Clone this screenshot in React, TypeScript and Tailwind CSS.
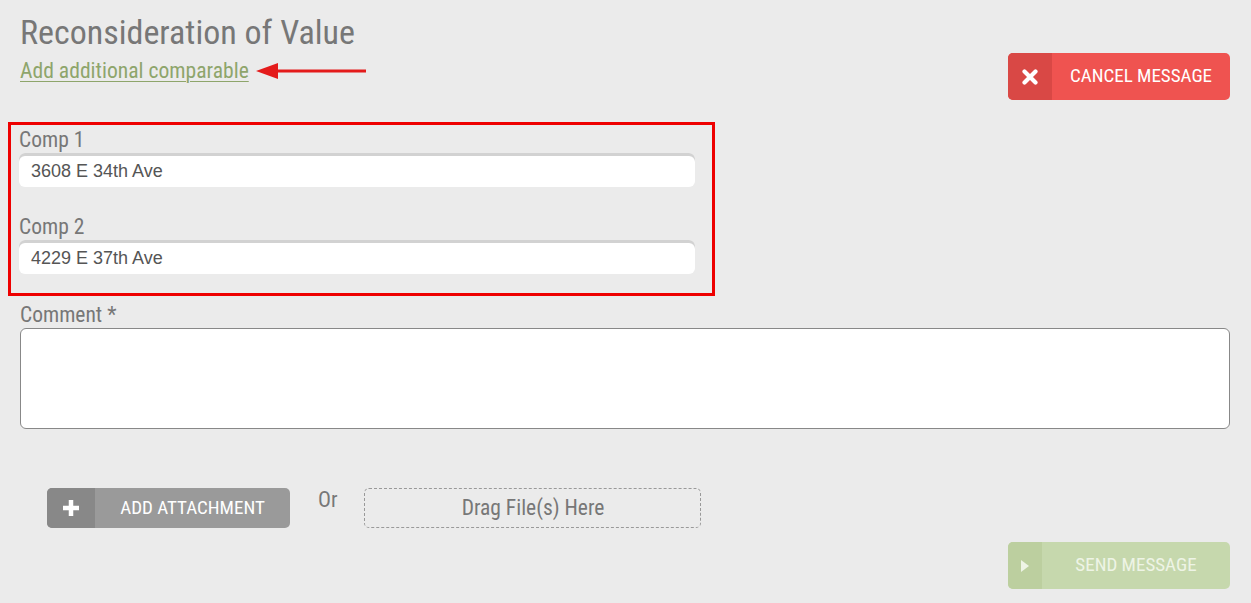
import React from "react";

const cond = { fontFamily: '"Roboto Condensed", "Liberation Sans Narrow", Roboto, sans-serif' };

export default function App() {
  return (
    <div className="min-h-[603px] w-[1251px] bg-[#ebebeb] pl-[20px] pr-[21px] pt-[15px]" style={cond}>
      <div className="flex items-start justify-between">
        <div className="flex flex-col">
          <h1 className="text-[34px] leading-[34px] text-[#777] font-normal">Reconsideration of Value</h1>
          <div className="relative mt-[10px] flex items-center">
            <a className="text-[21.6px] leading-[24px] text-[#8ea56b] underline underline-offset-[3px] decoration-1 cursor-pointer">
              Add additional comparable
            </a>
            <svg className="ml-[7px]" width="110" height="16" viewBox="0 0 110 16">
              <polygon points="0,8 22,0 22,16" fill="#e41b1b" />
              <rect x="20" y="6.5" width="90" height="3" fill="#e41b1b" />
            </svg>
          </div>
        </div>
        <button className="mt-[38px] flex h-[47px] w-[222px] overflow-hidden rounded-[5px] bg-[#ef5350] text-white">
          <span className="flex h-full w-[44px] items-center justify-center bg-[#d94845]">
            <svg width="16" height="16" viewBox="0 0 16 16">
              <path d="M2.5 2.5 L13.5 13.5 M13.5 2.5 L2.5 13.5" stroke="white" strokeWidth="4.2" strokeLinecap="round" />
            </svg>
          </span>
          <span className="flex flex-1 items-center justify-center text-[19px] uppercase">Cancel Message</span>
        </button>
      </div>

      <div className="-ml-[12px] mt-[22px] w-[707px] border-[3px] border-[#e00] pb-[19px] pl-[8px] pr-[17px] pt-[3px]">
        <Field label="Comp 1" value="3608 E 34th Ave" />
        <div className="h-[28px]" />
        <Field label="Comp 2" value="4229 E 37th Ave" />
      </div>

      <div className="mt-[7px] text-[21.5px] leading-[24px] text-[#777]">Comment *</div>
      <div className="mt-[1px] h-[101px] w-[1210px] rounded-[6px] border border-[#888] bg-white" />

      <div className="mt-[59px] flex items-start pl-[27px]">
        <button className="flex h-[40px] w-[243px] overflow-hidden rounded-[5px] bg-[#9a9a9a] text-white">
          <span className="flex h-full w-[48px] items-center justify-center bg-[#888]">
            <svg width="18" height="18" viewBox="0 0 18 18">
              <path d="M9 1 V17 M1 9 H17" stroke="white" strokeWidth="4.5" />
            </svg>
          </span>
          <span className="flex flex-1 items-center justify-center text-[19px] uppercase">Add Attachment</span>
        </button>
        <span className="ml-[28px] mt-[0px] text-[21.5px] leading-[24px] text-[#777]">Or</span>
        <div className="ml-[27px] flex h-[40px] w-[337px] items-center justify-center rounded-[5px] border border-dashed border-[#999] text-[21.5px] text-[#777]">
          Drag File(s) Here
        </div>
      </div>

      <div className="mt-[14px] flex justify-end">
        <button className="flex h-[47px] w-[222px] overflow-hidden rounded-[5px] bg-[#c6d8ad] text-[#eef4e6]">
          <span className="flex h-full w-[34px] items-center justify-center bg-[#bccf9f]">
            <svg width="10" height="14" viewBox="0 0 10 14">
              <polygon points="1,1 9,7 1,13" fill="#eef4e6" />
            </svg>
          </span>
          <span className="flex flex-1 items-center justify-center text-[19px] uppercase">Send Message</span>
        </button>
      </div>
    </div>
  );
}

function Field({ label, value }: { label: string; value: string }) {
  return (
    <div>
      <div className="text-[21.5px] leading-[24px] text-[#777]">{label}</div>
      <div
        className="mt-[1px] flex h-[34px] w-[676px] items-center rounded-[6px] bg-white pl-[12px] pt-[2px] text-[18px] text-[#555] shadow-[inset_0_3px_0_#d2d2d2]"
        style={{ fontFamily: '"Liberation Sans", Arial, sans-serif' }}
      >
        {value}
      </div>
    </div>
  );
}
